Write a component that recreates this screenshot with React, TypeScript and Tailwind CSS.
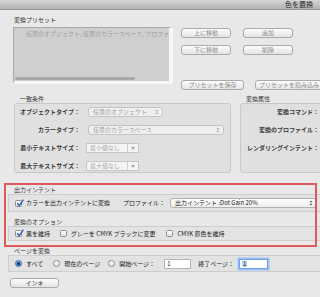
import React from 'react';

const Btn = ({ label, w, dark }: { label: string; w: string; dark?: boolean }) => (
  <div
    className={`${w} h-[10px] shrink-0 rounded-[3px] border border-[#aaaaaa] bg-gradient-to-b from-[#fdfdfd] to-[#e4e4e4] flex items-center justify-center text-[6px] leading-none ${
      dark ? 'text-[#222222]' : 'text-[#8e8e8e]'
    }`}
  >
    {label}
  </div>
);

const Arrows = ({ color = '#8a8a8a' }: { color?: string }) => (
  <svg width="4" height="6" viewBox="0 0 4 6" className="shrink-0">
    <path d="M0.5 2.3 L2 0.6 L3.5 2.3 Z" fill={color} />
    <path d="M0.5 3.7 L2 5.4 L3.5 3.7 Z" fill={color} />
  </svg>
);

const Popup = ({ label, w }: { label: string; w: string }) => (
  <div className={`${w} h-[10px] rounded-[3px] border border-[#c4c4c4] bg-[#efefef] flex items-center justify-between pl-[4px] pr-[3px] text-[6px] leading-none text-[#a0a0a0]`}>
    <span className="whitespace-nowrap">{label}</span>
    <Arrows color="#a6a6a6" />
  </div>
);

const Combo = ({ label }: { label: string }) => (
  <div className="w-[53px] h-[10px] flex border border-[#c6c6c6] bg-[#f4f4f4] text-[6px] leading-none text-[#a8a8a8]">
    <div className="flex-1 flex items-center pl-[3px]">{label}</div>
    <div className="w-[11px] border-l border-[#d0d0d0] flex items-center justify-center">
      <svg width="4" height="3" viewBox="0 0 4 3">
        <path d="M0 0 L4 0 L2 3 Z" fill="#a8a8a8" />
      </svg>
    </div>
  </div>
);

const Check = ({ checked, className = '' }: { checked?: boolean; className?: string }) => (
  <span className={`relative block w-[7px] h-[7px] shrink-0 rounded-[1.5px] border border-[#8e8e8e] bg-gradient-to-b from-white to-[#e2e2e2] ${className}`}>
    {checked && (
      <svg className="absolute -top-[2px] left-[0px]" width="8" height="8" viewBox="0 0 8 8">
        <path d="M1.2 4.2 L3.2 6.6 L7.4 0.6" stroke="#2d5fc4" strokeWidth="1.4" fill="none" />
      </svg>
    )}
  </span>
);

const Radio = ({ on, className = '' }: { on?: boolean; className?: string }) =>
  on ? (
    <span className={`block w-[7px] h-[7px] shrink-0 rounded-full border border-[#3c67b4] bg-gradient-to-b from-[#9cc2f2] to-[#4c86dc] flex items-center justify-center ${className}`}>
      <span className="block w-[3px] h-[3px] rounded-full bg-[#142a55]" />
    </span>
  ) : (
    <span className={`block w-[7px] h-[7px] shrink-0 rounded-full border border-[#8e8e8e] bg-gradient-to-b from-white to-[#e2e2e2] ${className}`} />
  );

const Field = ({ label }: { label: string }) => (
  <div className="flex items-center h-[10px]">
    <div className="w-[65px] text-right font-bold text-[#3a3a3a] whitespace-nowrap">{label}</div>
  </div>
);

export default function App() {
  return (
    <div className="relative w-[320px] h-[297px] overflow-hidden bg-[#e8e8e8] font-['Noto_Sans_CJK_JP',sans-serif] text-[6px] leading-none text-[#222222]">
      {/* title bar */}
      <div className="h-[10px] bg-gradient-to-b from-[#d6d6d6] to-[#b4b4b4] border-b border-[#999999] flex items-center justify-end pr-[7px] text-[7px] text-[#262626]">
        色を置換
      </div>

      {/* presets */}
      <div className="ml-[14px] mt-[6px] leading-[8px] text-[#333333]">変換プリセット</div>
      <div className="flex mt-[3px] ml-[13px]">
        <div className="w-[166px] h-[57px] bg-[#cfcfcf] border-t border-l border-[#a9a9a9] border-r-[4px] border-b-[3px] border-r-[#f7f7f7] border-b-[#f7f7f7] flex flex-col">
          <div className="pl-[12px] pt-[3px] text-[#9c9c9c] whitespace-nowrap overflow-hidden">
            任意のオブジェクト, 任意のカラースペース, プロファ
          </div>
          <div className="mt-auto mb-[1px] ml-[1px] w-[120px] h-[3px] rounded-full bg-[#a9a9a9]" />
        </div>
        <div className="ml-[8px] h-[63px] flex flex-col">
          <div className="mt-[1px] grid grid-cols-[50px_50px] gap-x-[12px] gap-y-[7px]">
            <Btn label="上に移動" w="w-[50px]" />
            <Btn label="追加" w="w-[50px]" />
            <Btn label="下に移動" w="w-[50px]" />
            <Btn label="削除" w="w-[50px]" />
          </div>
          <div className="mt-auto flex gap-[11px]">
            <Btn label="プリセットを保存" w="w-[63px]" />
            <Btn label="プリセットを読み込み" w="w-[68px]" />
          </div>
        </div>
      </div>

      {/* criteria / attributes */}
      <div className="flex mt-[5px] ml-[14px] gap-[9px]">
        <div className="flex flex-col">
          <div className="ml-[6px] leading-[8px] text-[#333333]">一致条件</div>
          <div className="w-[217px] h-[70px] rounded-[3px] border border-[#c8c8c8] bg-[#e0e0e0] pt-[3px] flex flex-col gap-[8px]">
            <div className="flex items-center">
              <Field label="オブジェクトタイプ：" />
              <div className="ml-[8px]">
                <Popup label="任意のオブジェクト" w="w-[75px]" />
              </div>
            </div>
            <div className="flex items-center">
              <Field label="カラータイプ：" />
              <div className="ml-[8px]">
                <Popup label="任意のカラースペース" w="w-[136px]" />
              </div>
            </div>
            <div className="flex items-center">
              <Field label="最小テキストサイズ：" />
              <div className="ml-[6px]">
                <Combo label="最小値なし" />
              </div>
            </div>
            <div className="flex items-center">
              <Field label="最大テキストサイズ：" />
              <div className="ml-[6px]">
                <Combo label="最大値なし" />
              </div>
            </div>
          </div>
        </div>
        <div className="flex flex-col">
          <div className="ml-[6px] leading-[8px] text-[#333333]">変換属性</div>
          <div className="w-[120px] h-[70px] rounded-[3px] border border-[#c8c8c8] bg-[#e0e0e0] pt-[3px] flex flex-col gap-[8px]">
            {['変換コマンド：', '変換のプロファイル：', 'レンダリングインテント：'].map((t) => (
              <div key={t} className="h-[10px] flex items-center">
                <div className="w-[78px] text-right font-bold text-[#3a3a3a] whitespace-nowrap">{t}</div>
              </div>
            ))}
          </div>
        </div>
      </div>

      {/* output intent */}
      <div className="ml-[14px] mt-[13px] leading-[8px] text-[#333333]">出力インテント</div>
      <div className="ml-[8px] w-[330px] h-[18px] border border-[#cdcdcd] bg-[#e3e3e3] flex items-center pl-[6px]">
        <Check checked />
        <span className="ml-[4px] whitespace-nowrap">カラーを出力インテントに変換</span>
        <span className="ml-[13px] whitespace-nowrap">プロファイル：</span>
        <div className="ml-[5px] w-[147px] h-[10px] rounded-[3px] border border-[#b0b0b0] bg-gradient-to-b from-white to-[#ededed] flex items-center justify-between pl-[4px] pr-[3px]">
          <span className="whitespace-nowrap">出力インテント :Dot Gain 20%</span>
          <Arrows color="#555555" />
        </div>
      </div>

      <div className="ml-[14px] mt-[6px] leading-[8px] text-[#333333]">変換のオプション</div>
      <div className="ml-[8px] w-[330px] h-[15px] border border-[#cdcdcd] bg-[#e3e3e3] flex items-center pl-[6px]">
        <Check checked />
        <span className="ml-[4px] whitespace-nowrap">黒を維持</span>
        <Check className="ml-[10px]" />
        <span className="ml-[4px] whitespace-nowrap">グレーを CMYK ブラックに変更</span>
        <Check className="ml-[11px]" />
        <span className="ml-[4px] whitespace-nowrap">CMYK 原色を維持</span>
      </div>

      {/* pages */}
      <div className="ml-[14px] mt-[6px] leading-[8px] text-[#333333]">ページを変換</div>
      <div className="ml-[8px] w-[330px] h-[17px] border border-[#cdcdcd] bg-[#e3e3e3] flex items-center pl-[6px]">
        <Radio on />
        <span className="ml-[4px] whitespace-nowrap">すべて</span>
        <Radio className="ml-[10px]" />
        <span className="ml-[4px] whitespace-nowrap">現在のページ</span>
        <Radio className="ml-[8px]" />
        <span className="ml-[4px] whitespace-nowrap">開始ページ：</span>
        <div className="ml-[9px] w-[27px] h-[10px] border border-[#b4b4b4] bg-white flex items-center pl-[2px]">1</div>
        <span className="ml-[7px] whitespace-nowrap">終了ページ：</span>
        <div className="ml-[5px] w-[29px] h-[10px] border border-[#6f9ee6] ring-[1.5px] ring-[#9cc0f4] bg-white flex items-center pl-[2px]">
          <span className="bg-[#b5d3fb] px-[1px]">1</span>
        </div>
      </div>

      <div className="ml-[10px] mt-[6px]">
        <Btn label="インキ" w="w-[49px]" dark />
      </div>

      {/* annotation overlay */}
      <div className="absolute left-[4px] top-[183px] w-[313px] h-[64px] border-2 border-[#de5b5b] pointer-events-none" />
    </div>
  );
}
